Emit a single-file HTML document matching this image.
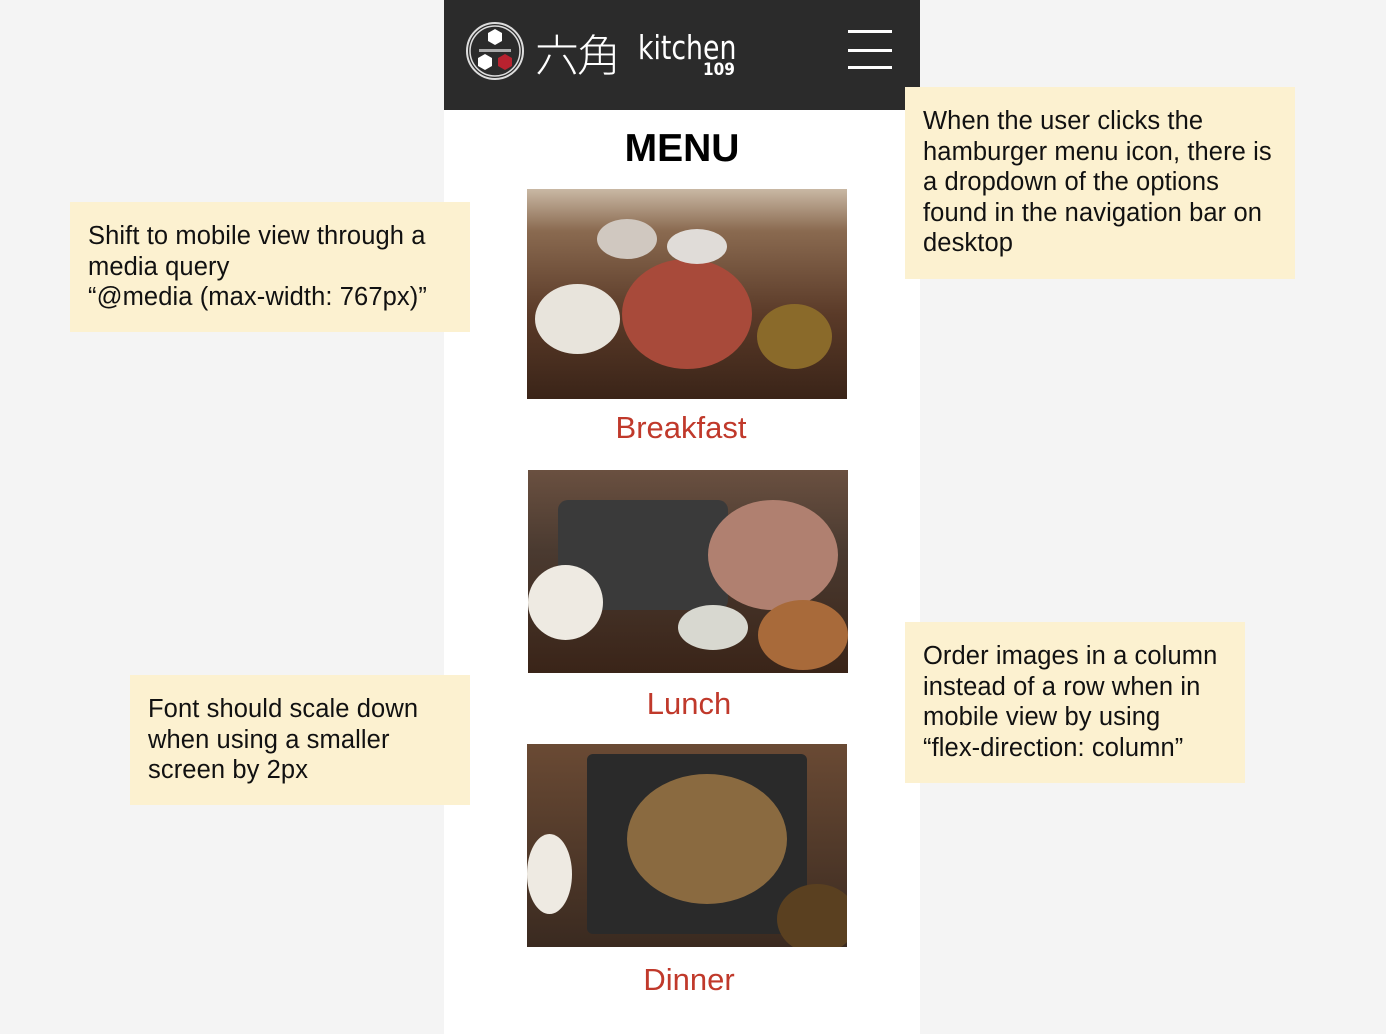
<!DOCTYPE html>
<html><head><meta charset="utf-8"><style>
body{margin:0;width:1386px;height:1034px;background:#f4f4f4;position:relative;overflow:hidden;font-family:"Liberation Sans",Arial,sans-serif}
.col{position:absolute;left:444px;top:0;width:476px;height:1034px;background:#fff}
.hdr{position:absolute;left:444px;top:0;width:476px;height:110px;background:#2b2b2b}
.note{position:absolute;background:#fcf1d0;color:#111;font-size:25.5px;line-height:30.5px;box-sizing:border-box;padding:19px 18px;white-space:nowrap;letter-spacing:0.1px}
.img{position:absolute;overflow:hidden;background:#4a2c1c}
.img i{position:absolute;border-radius:50%}
.cap{position:absolute;color:#c0392b;font-size:31px;text-align:center;width:476px;left:444px}
.bar{position:absolute;left:848px;width:44px;height:3px;background:#fff}
</style></head><body>
<div class="col"></div>
<div class="hdr"></div>
<svg style="position:absolute;left:464px;top:20px" width="62" height="62" viewBox="0 0 62 62">
<circle cx="31" cy="31" r="28" fill="none" stroke="#ddd" stroke-width="2"/><circle cx="31" cy="31" r="25" fill="none" stroke="#ddd" stroke-width="1.5"/>
<polygon points="31,9 38,13 38,21 31,25 24,21 24,13" fill="#fff"/>
<rect x="15" y="29" width="32" height="3" fill="#aaa"/>
<polygon points="21,34 28,38 28,46 21,50 14,46 14,38" fill="#fff"/>
<polygon points="41,34 48,38 48,46 41,50 34,46 34,38" fill="#b8222f"/>
</svg>
<div style="position:absolute;left:535px;top:20px;color:#fff;font-size:44px;font-family:'Noto Sans CJK JP',sans-serif;font-weight:300;letter-spacing:-2px">六角</div>
<div style="position:absolute;left:638px;top:28px;color:#fff;font-size:33px;font-family:'DejaVu Sans Condensed','DejaVu Sans',sans-serif;transform:scaleX(.9);transform-origin:left">kitchen</div>
<div style="position:absolute;left:703px;top:60px;color:#fff;font-size:17px;font-weight:bold;font-family:'DejaVu Sans Condensed',sans-serif">109</div>
<div class="bar" style="top:30px"></div><div class="bar" style="top:49px"></div><div class="bar" style="top:66px"></div>
<div style="position:absolute;left:444px;width:476px;top:127px;text-align:center;font-weight:bold;font-size:39px">MENU</div>

<div class="img" style="left:527px;top:189px;width:320px;height:210px;background:linear-gradient(#c9b8a4 0,#8a6a50 20%,#5a3a28 60%,#3a2418 100%)">
<i style="left:95px;top:70px;width:130px;height:110px;background:#a84a3a"></i>
<i style="left:8px;top:95px;width:85px;height:70px;background:#e8e4dc"></i>
<i style="left:230px;top:115px;width:75px;height:65px;background:#8a6a2a"></i>
<i style="left:70px;top:30px;width:60px;height:40px;background:#d0c8c0"></i>
<i style="left:140px;top:40px;width:60px;height:35px;background:#e0dcd8"></i>
</div>
<div class="cap" style="top:410px;left:443px">Breakfast</div>
<div class="img" style="left:528px;top:470px;width:320px;height:203px;background:linear-gradient(#6a5040 0,#4a3a30 40%,#3a2418 100%)">
<i style="left:30px;top:30px;width:170px;height:110px;background:#3a3a3a;border-radius:10px"></i>
<i style="left:180px;top:30px;width:130px;height:110px;background:#b08070"></i>
<i style="left:0;top:95px;width:75px;height:75px;background:#eeeae2"></i>
<i style="left:230px;top:130px;width:90px;height:70px;background:#a86a3a"></i>
<i style="left:150px;top:135px;width:70px;height:45px;background:#d8d8d0"></i>
</div>
<div class="cap" style="top:686px;left:451px">Lunch</div>
<div class="img" style="left:527px;top:744px;width:320px;height:203px;background:linear-gradient(#6a4a34,#3a2a20)">
<i style="left:60px;top:10px;width:220px;height:180px;background:#2a2a2a;border-radius:6px"></i>
<i style="left:100px;top:30px;width:160px;height:130px;background:#8a6a40"></i>
<i style="left:0;top:90px;width:45px;height:80px;background:#eeeae2"></i>
<i style="left:250px;top:140px;width:80px;height:70px;background:#5a4020"></i>
</div>
<div class="cap" style="top:962px;left:451px">Dinner</div>
<div class="note" style="left:70px;top:202px;width:400px;height:130px">Shift to mobile view through a<br>media query<br>“@media (max-width: 767px)”</div>
<div class="note" style="left:130px;top:675px;width:340px;height:130px">Font should scale down<br>when using a smaller<br>screen by 2px</div>
<div class="note" style="left:905px;top:87px;width:390px;height:192px">When the user clicks the<br>hamburger menu icon, there is<br>a dropdown of the options<br>found in the navigation bar on<br>desktop</div>
<div class="note" style="left:905px;top:622px;width:340px;height:161px">Order images in a column<br>instead of a row when in<br>mobile view by using<br>“flex-direction: column”</div>
</body></html>
